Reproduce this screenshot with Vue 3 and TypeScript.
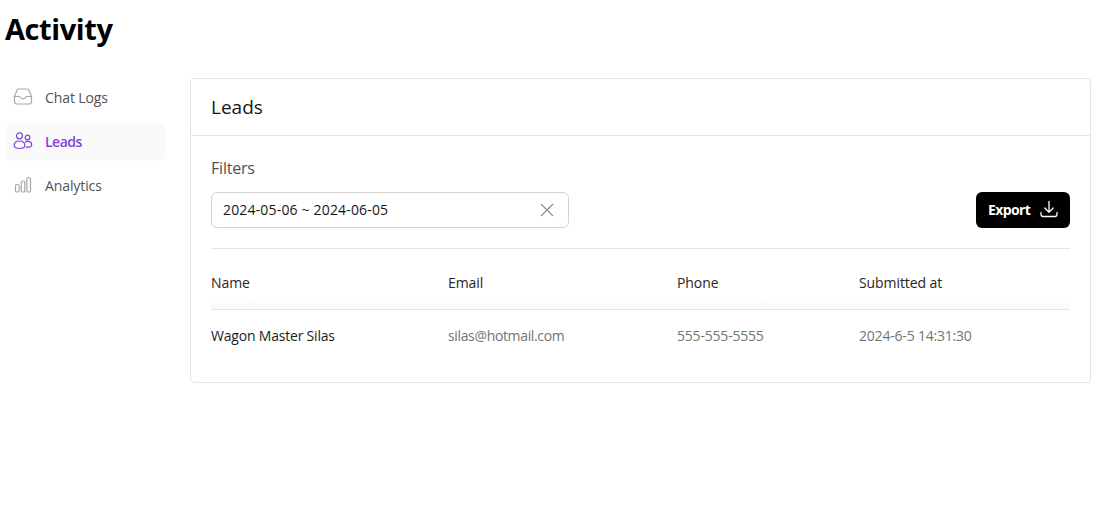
<script setup lang="ts">
interface Lead { name: string; email: string; phone: string; submitted: string }
const leads: Lead[] = [
  { name: 'Wagon Master Silas', email: 'silas@hotmail.com', phone: '555-555-5555', submitted: '2024-6-5 14:31:30' },
]
</script>

<template>
  <div class="page">
    <h1 class="title">Activity</h1>
    <div class="body">
      <nav class="side">
        <a class="item">
          <svg width="20" height="20" viewBox="0 0 20 20" fill="none" stroke="#a8a8a8" stroke-width="1.2" stroke-linejoin="round" stroke-linecap="round">
            <path d="M1.500 9.500 4 3.200A1.600 1.600 0 0 1 5.500 2h9A1.600 1.600 0 0 1 16 3.200l2.500 6.300v5A2.500 2.500 0 0 1 16 17H4a2.500 2.500 0 0 1-2.500-2.500z" />
            <path d="M1.500 9.500H6c.6 0 1 .3 1.300.8.500 1 1.200 1.500 2.700 1.500s2.200-.5 2.700-1.500c.3-.5.7-.8 1.300-.8h4.500" />
          </svg>
          <span>Chat Logs</span>
        </a>
        <a class="item active">
          <svg width="20" height="20" viewBox="0 0 20 20" fill="none" stroke="#7c45d6" stroke-width="1.2">
            <circle cx="6.500" cy="4.800" r="3" />
            <circle cx="14.500" cy="6.500" r="2.300" />
            <path d="M1.200 14.500c0-2.800 2.300-4.500 5.300-4.500s5.300 1.700 5.300 4.500c0 2-2.300 3-5.300 3s-5.300-1-5.300-3z" />
            <path d="M12 11c.7-.4 1.500-.6 2.500-.6 2.400 0 4.200 1.200 4.200 3.300 0 1.700-1.800 2.500-4.200 2.500-.6 0-1.100 0-1.700-.2" />
          </svg>
          <span>Leads</span>
        </a>
        <a class="item">
          <svg width="20" height="20" viewBox="0 0 20 20" fill="none" stroke="#a8a8a8" stroke-width="1.2">
            <rect x="2.500" y="9.500" width="3.600" height="7.500" rx="1.300" />
            <rect x="8.200" y="6" width="3.600" height="11" rx="1.300" />
            <rect x="13.900" y="2.500" width="3.600" height="14.500" rx="1.300" />
          </svg>
          <span>Analytics</span>
        </a>
      </nav>
      <section class="panel">
        <header class="head">Leads</header>
        <div class="content">
          <div class="flabel">Filters</div>
          <div class="controls">
            <div class="range">
              <span>2024-05-06 ~ 2024-06-05</span>
              <svg width="14" height="14" viewBox="0 0 14 14" fill="none" stroke="#8f8f8f" stroke-width="1.200">
                <path d="M1 1l12 12M13 1 1 13" />
              </svg>
            </div>
            <button class="export" type="button">
              <span>Export</span>
              <svg width="18" height="18" viewBox="0 0 18 18" fill="none" stroke="#fff" stroke-width="1.300" stroke-linecap="round" stroke-linejoin="round">
                <path d="M9 1.500v10.500M4.800 8 9 12.200 13.200 8" />
                <path d="M1 12.500v1.800A2.200 2.200 0 0 0 3.200 16.500h11.600a2.200 2.200 0 0 0 2.200-2.200v-1.800" />
              </svg>
            </button>
          </div>
          <table class="table">
            <thead>
              <tr>
                <th class="c1">Name</th>
                <th class="c2">Email</th>
                <th class="c3">Phone</th>
                <th>Submitted at</th>
              </tr>
            </thead>
            <tbody>
              <tr v-for="lead in leads" :key="lead.email">
                <td class="name">{{ lead.name }}</td>
                <td class="mail">{{ lead.email }}</td>
                <td>{{ lead.phone }}</td>
                <td>{{ lead.submitted }}</td>
              </tr>
            </tbody>
          </table>
        </div>
      </section>
    </div>
  </div>
</template>

<style>
html, body { background: #fff; }
</style>

<style scoped>
.page {
  box-sizing: border-box;
  width: 1099px;
  height: 510px;
  overflow: hidden;
  padding: 0 8px 0 5px;
  font-family: "Open Sans", "Noto Sans", sans-serif;
  color: #111;
}
.title {
  margin: 0;
  height: 78px;
  padding-top: 9px;
  box-sizing: border-box;
  font-size: 29px;
  line-height: 40px;
  font-weight: 700;
  letter-spacing: -0.4px;
  color: #000;
}
.body { display: flex; align-items: flex-start; gap: 25px; }
.side { width: 160px; flex: none; display: flex; flex-direction: column; gap: 6px; padding-top: 1px; }
.item {
  display: flex;
  align-items: center;
  gap: 12px;
  height: 38px;
  box-sizing: border-box;
  padding: 0 0 2px 8px;
  border-radius: 6px;
  font-size: 14px;
  letter-spacing: -0.1px;
  color: #525252;
}
.item svg { flex: none; margin-top: -1px; }
.item.active { background: #fafafa; color: #7c45d6; font-weight: 600; letter-spacing: -0.5px; }
.panel {
  flex: 1;
  min-width: 0;
  box-sizing: border-box;
  border: 1px solid #e5e5e5;
  border-radius: 4px;
}
.head {
  height: 57px;
  box-sizing: border-box;
  padding: 0 20px;
  display: flex;
  align-items: center;
  font-size: 19px;
  border-bottom: 1px solid #e5e5e5;
  color: #171717;
}
.content { padding: 20px 20px 19px; }
.flabel { font-size: 16px; line-height: 24px; letter-spacing: -0.2px; color: #525252; }
.controls {
  display: flex;
  align-items: center;
  justify-content: space-between;
  margin-top: 12px;
  padding-bottom: 20px;
  border-bottom: 1px solid #e5e5e5;
}
.range {
  box-sizing: border-box;
  width: 358px;
  height: 36px;
  display: flex;
  align-items: center;
  justify-content: space-between;
  padding: 0 14px 0 11px;
  border: 1px solid #d4d4d4;
  border-radius: 6px;
  font-size: 14px;
  letter-spacing: 0.17px;
  color: #171717;
}
.range span { padding-bottom: 2px; }
.export {
  box-sizing: border-box;
  width: 94px;
  height: 36px;
  display: flex;
  align-items: center;
  gap: 10px;
  padding: 0 0 2px 12px;
  background: #000;
  border: 0;
  border-radius: 6px;
  color: #fff;
  font: 700 14px "Open Sans", "Noto Sans", sans-serif;
  letter-spacing: -0.6px;
}
.table { width: 100%; border-collapse: collapse; table-layout: fixed; font-size: 14px; }
th {
  height: 60px;
  box-sizing: border-box;
  padding: 8px 0 0;
  text-align: left;
  font-weight: 400;
  letter-spacing: -0.08px;
  color: #262626;
  border-bottom: 1px solid #e5e5e5;
  background: linear-gradient(#fff 84%, #f9f9f9);
}
td { height: 54px; box-sizing: border-box; padding: 0 0 2px; color: #737373; letter-spacing: -0.2px; }
td.name { color: #1c1c1c; font-weight: 500; letter-spacing: -0.2px; }
td.mail { letter-spacing: -0.35px; }
.c1 { width: 237px; }
.c2 { width: 229px; }
.c3 { width: 182px; }
</style>
